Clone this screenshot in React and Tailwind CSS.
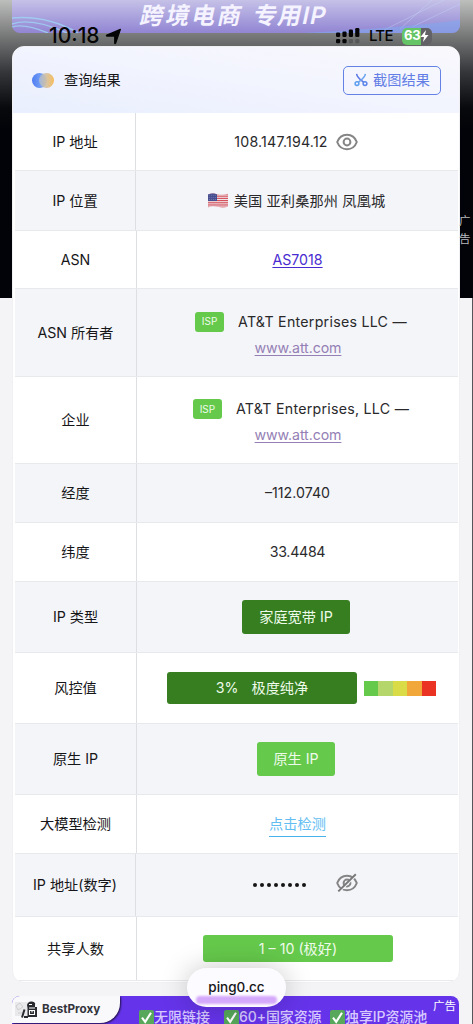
import clsx from 'clsx';

function LocationArrow() {
  return (
    <svg className="h-[17px] w-[17px]" viewBox="0 0 17 17">
      <path d="M15.4 1.4 10.6 15.2Q10 16 9.7 15V8.1H2Q.8 7.8 1.9 7.1Z" fill="#050506" stroke="#050506" strokeWidth="1.2" strokeLinejoin="round" />
    </svg>
  );
}

function SignalBars() {
  const bars = [4.5, 5.5, 7.5, 9];
  return (
    <svg className="h-[18px] w-6" viewBox="0 0 24 18">
      {bars.map((h, i) => (
        <g key={i} fill="#060608">
          <rect x={i * 6.4} y={10 - h} width="4.2" height={h} rx="1.3" />
          <rect x={i * 6.4} y="12" width="4.2" height="4.2" rx="1.3" opacity={i < 2 ? 1 : 0.22} />
        </g>
      ))}
    </svg>
  );
}

function Eye({ off }) {
  return (
    <svg className={off ? 'h-5 w-[22px]' : 'h-[18px] w-[22px]'} viewBox="0 0 22 18" fill="none" stroke="#858585" strokeWidth="2">
      <path d="M1.2 9C3 4.2 6.6 1.8 11 1.8S19 4.2 20.8 9C19 13.8 15.4 16.2 11 16.2S3 13.8 1.2 9Z" />
      <circle cx="11" cy="9" r="3.4" />
      {off && <path d="M3.4 17.2 20.6.7" stroke="#f4f5f9" strokeWidth="2.4" />}
      {off && <path d="M2.3 17.4 19.8.3" stroke="#777" strokeWidth="1.9" />}
    </svg>
  );
}

function Flag() {
  return (
    <svg className="h-[15px] w-5" viewBox="0 0 20 15">
      <clipPath id="wave">
        <path d="M0 1.4C4-.4 7 .8 10 1.4S17 2 20 .8V13.5C16 15 13 14.4 10 13.8S3 13 0 14.4Z" />
      </clipPath>
      <g clipPath="url(#wave)">
        <rect width="20" height="15" fill="#f0e4e6" />
        {[0, 1, 2, 3, 4, 5, 6].map((n) => (
          <rect key={n} y={n * 2.2 + 0.4} width="20" height="1.15" fill="#d4505d" />
        ))}
        <rect width="9" height="8" fill="#484f91" />
        <g fill="#aeb2d8">
          {[1.5, 3.7, 5.9].map((y) =>
            [1.2, 3.2, 5.2, 7.2].map((x) => <circle key={x + '-' + y} cx={x} cy={y + 0.6} r=".4" />)
          )}
        </g>
      </g>
    </svg>
  );
}

function Scissors() {
  return (
    <svg className="h-[14px] w-[14px]" viewBox="0 0 14 14" fill="none" strokeWidth="1.5">
      <path d="M2.6.8C3 4.4 6.5 6.6 9.6 9.3" stroke="#5b79e6" />
      <path d="M11.4.8C11 4.4 7.5 6.6 4.4 9.3" stroke="#6fa5ee" />
      <circle cx="3" cy="10.6" r="1.9" stroke="#5c9ff0" />
      <circle cx="11" cy="10.6" r="1.9" stroke="#5c86ec" />
    </svg>
  );
}

function Check() {
  return (
    <svg className="h-[15px] w-[15px] shrink-0" viewBox="0 0 15 15">
      <rect width="15" height="15" rx="2" fill="#57a85a" />
      <path d="M3 7.6 6.2 11.8 12 2.8" fill="none" stroke="#fff" strokeWidth="2.1" />
    </svg>
  );
}

function Badge({ className, children }) {
  return (
    <span className={clsx('flex items-center justify-center rounded-[3px] text-[#eefbea]', className)}>
      {children}
    </span>
  );
}

function Owner({ name }) {
  return (
    <div className="flex flex-col items-center pt-[3px] pl-[7px]">
      <div className="flex h-[26px] items-center">
        <Badge className="mr-[14px] h-5 w-[29px] bg-[#65c94b] text-[10px]">ISP</Badge>
        <span className="tracking-[0.26px] whitespace-nowrap">{name} —</span>
      </div>
      <a className="mr-[6px] h-[25px] leading-[25px] tracking-[-0.1px] text-[#9480b5] underline underline-offset-2">
        www.att.com
      </a>
    </div>
  );
}

const scale = ['bg-[#65c94b]', 'bg-[#b5d66b]', 'bg-[#d9dc46]', 'bg-[#f1a73a]', 'bg-[#ea3323]'];

const rows = [
  {
    label: 'IP 地址',
    height: 'h-[58px]',
    narrow: true,
    value: (
      <div className="flex items-center gap-[8px] pt-[1px] pr-[2px]">
        <span className="tracking-[0.2px]">108.147.194.12</span>
        <Eye />
      </div>
    ),
  },
  {
    label: 'IP 位置',
    height: 'h-[60px]',
    narrow: true,
    value: (
      <div className="flex items-center gap-[6px] pr-[1px]">
        <Flag />
        <span className="tracking-[0.15px]">美国 亚利桑那州 凤凰城</span>
      </div>
    ),
  },
  {
    label: 'ASN',
    height: 'h-[58px]',
    value: <a className="text-[#472bd0] underline underline-offset-2">AS7018</a>,
  },
  { label: 'ASN 所有者', height: 'h-[88px]', value: <Owner name="AT&T Enterprises LLC" /> },
  { label: '企业', height: 'h-[87px]', value: <Owner name="AT&T Enterprises, LLC" /> },
  { label: '经度', height: 'h-[59px]', value: '–112.0740' },
  { label: '纬度', height: 'h-[59px]', value: <span className="tracking-[-0.3px]">33.4484</span> },
  {
    label: 'IP 类型',
    height: 'h-[71px]',
    value: <Badge className="mr-[3px] h-[34px] w-[108px] bg-[#367e20]">家庭宽带 IP</Badge>,
  },
  {
    label: '风控值',
    height: 'h-[71px]',
    value: (
      <div className="flex items-center gap-[7px] pl-[8px]">
        <Badge className="h-8 w-[190px] gap-[13px] bg-[#367e20]">
          <span>3%</span>
          <span>极度纯净</span>
        </Badge>
        <div className="flex h-[15px] w-[72px]">
          {scale.map((color) => (
            <i key={color} className={clsx('flex-1', color)} />
          ))}
        </div>
      </div>
    ),
  },
  {
    label: '原生 IP',
    height: 'h-[71px]',
    value: <Badge className="mr-[3px] h-[34px] w-[78px] bg-[#65c94b]">原生 IP</Badge>,
  },
  {
    label: '大模型检测',
    height: 'h-[59px]',
    value: <a className="border-b border-[#4ab3ee] leading-[25px] text-[#61bdf2]">点击检测</a>,
  },
  {
    label: 'IP 地址(数字)',
    height: 'h-[63px]',
    narrow: true,
    value: (
      <div className="flex items-center gap-[30px] pb-[5px] pl-[16px]">
        <div className="mt-[5px] flex gap-[3px]">
          {[0, 1, 2, 3, 4, 5, 6, 7].map((n) => (
            <i key={n} className="h-1 w-1 rounded-full bg-[#151515]" />
          ))}
        </div>
        <Eye off />
      </div>
    ),
  },
  {
    label: '共享人数',
    height: 'h-[64px]',
    value: <Badge className="ml-[1px] h-[27px] w-[190px] bg-[#65c94b]">1 – 10 (极好)</Badge>,
  },
];

function Row({ label, value, height, narrow, striped }) {
  return (
    <div className={clsx('flex shrink-0 border-b border-[#e8e9ec]', height, striped ? 'bg-[#f4f5f9]' : 'bg-white')}>
      <div
        className={clsx(
          'flex shrink-0 items-center justify-center border-r border-[#dedfe2]',
          narrow ? 'w-[121px]' : 'w-[122px]'
        )}
      >
        {label}
      </div>
      <div className="flex flex-1 items-center justify-center text-[#29292b]">{value}</div>
    </div>
  );
}

function StatusBar() {
  return (
    <div className="absolute inset-x-0 top-[26px] h-5 text-[#050506]">
      <div className="flex h-5 items-center pl-[49px]">
        <span className="w-[53px] text-[21px] leading-5 font-medium whitespace-nowrap">10:18</span>
        <span className="ml-[3px]"><LocationArrow /></span>
        <span className="ml-auto"><SignalBars /></span>
        <span className="ml-[9px] w-[25px] text-[15px] font-medium tracking-[-0.7px]">LTE</span>
        <span className="mr-[41px] ml-[8px] flex h-[17px] w-[30px] items-center rounded-[5px] bg-linear-to-r from-[#65c466] from-63% to-[#626266] to-63% pl-[2px] text-[13px] font-bold tracking-[-0.3px] text-white">
          63
          <svg className="h-3 w-[9px]" viewBox="0 0 9 12">
            <path d="M6 0 .5 7H4L3 12 8.5 5H5Z" fill="#fff" />
          </svg>
        </span>
      </div>
    </div>
  );
}

function Banner() {
  return (
    <div className="relative ml-[12px] h-[33px] w-[448px] shrink-0 overflow-hidden rounded-b-[8px] bg-linear-to-b from-[#c5c1e7] to-[#9285d3]">
      <svg className="absolute inset-0 h-full w-full" viewBox="0 0 448 33" fill="none">
        <path d="M0 18Q35 15 66 33M0 24Q20 17 55 33M0 27Q12 23 36 33" stroke="#9ed5f4" strokeWidth="1.4" opacity=".8" />
        <path d="M370 31 432 0M388 29 420 0M400 27 448 4" stroke="#c8d8f7" opacity=".4" />
        <path d="M290 33Q390 28 448 20V33Z" fill="#82a9ee" opacity=".6" />
      </svg>
      <div className="relative ml-[129px] flex -skew-x-12 gap-[10px] pt-[4px] text-[23.5px] leading-[24px] font-bold whitespace-nowrap text-[#f5f3ff]">
        <span className="tracking-[2.3px]">跨境电商</span>
        <span className="flex tracking-[1px]">专用<b className="text-[24px] font-semibold">IP</b></span>
      </div>
    </div>
  );
}

function BottomAd() {
  return (
    <div className="relative ml-[12px] mt-[13px] h-[28px] w-[447px] shrink-0 overflow-hidden rounded-t-[8px] bg-[#6534ea]">
      <div className="absolute top-0 left-0 flex h-[27px] w-[108px] items-center rounded-br-[20px] bg-[#f9f9fb] pl-[3px] shadow-[1px_1px_2px_#24124f]">
        <svg className="h-5 w-[25px]" viewBox="0 0 25 20">
          <path d="M0 2H13V16H0Z" fill="#e9e9eb" />
          <path d="M1 6 5 3 8 7 3 10ZM3 13H9" fill="none" stroke="#cfcfd2" />
          <path d="M12 5Q13 1 17 1.5T20 5V7H22V17H12.5V8Z" fill="#292a30" />
          <path d="M7 17.5 9.5 9.5M9 17H13" stroke="#292a30" strokeWidth="2" />
          <path d="M14 4.5H17M14 8H20M14.5 10.5V14.5H19.5V10.5ZM17 11V12.5" fill="none" stroke="#fff" strokeWidth="1.1" />
        </svg>
        <b className="ml-[2px] text-[11.7px] font-bold tracking-[0px] text-[#34343c]">BestProxy</b>
      </div>
      <div className="absolute top-[14px] left-[127px] flex text-[14px] leading-[14px] font-medium whitespace-nowrap text-[#d7c9ff]">
        <span className="flex w-[85px]"><Check />无限链接</span>
        <span className="flex w-[106px] tracking-[-0.1px]"><Check />60+国家资源</span>
        <span className="flex tracking-[-0.1px]"><Check />独享IP资源池</span>
      </div>
      <span className="absolute top-0 right-[2px] px-[1px] text-[11.5px] leading-[21px] text-white">广告</span>
    </div>
  );
}

export default function App() {
  return (
    <div className="relative flex h-[1024px] w-[473px] flex-col overflow-hidden bg-[linear-gradient(to_bottom,#bdbfbd_0px,#737474_38px,#35363a_72px,#07090c_108px,#020308_130px,#020308_298px,#f4f4f7_298px)] font-[Inter,'Noto_Sans_CJK_SC',sans-serif] text-[14.2px] text-[#161618]">
      <Banner />
      <div className="ml-[12px] mt-[13px] flex h-[937px] w-[448px] shrink-0 flex-col overflow-hidden rounded-[12px] border border-[#f0f0f3] bg-white">
        <header className="flex h-[66px] shrink-0 items-center bg-linear-to-tr from-[#e9effe] via-[#f2f4fe] to-[#f9f9fd] pr-[18px] pl-[19px]">
          <div className="flex">
            <i className="h-[15px] w-[15px] rounded-full bg-linear-to-r from-[#4f7df2] to-[#8eb3f4]" />
            <i className="-ml-[8px] h-[15px] w-[15px] rounded-full bg-linear-to-r from-[#a9bdd8]/80 to-[#f7bd58]" />
          </div>
          <span className="ml-[10px]">查询结果</span>
          <button className="ml-auto flex h-[29px] w-[98px] items-center justify-center gap-[5px] rounded-[5px] border border-[#6482e5] text-[#627de5]">
            <Scissors />
            截图结果
          </button>
        </header>
        <div className="mr-[1px] ml-[2px] flex flex-col">
          {rows.map((row, i) => (
            <Row key={row.label} {...row} striped={i % 2 === 1} />
          ))}
        </div>
      </div>
      <BottomAd />
      <StatusBar />
      <span className="absolute top-[212px] right-[2px] w-3 text-[11.5px] leading-[18px] text-[#b8b9be]">广告</span>
      <div className="absolute top-[298px] right-0 bottom-0 w-px bg-[#55555a]" />
      <div className="absolute top-[968px] left-[187px] flex h-[39px] w-[99px] items-center justify-center rounded-full bg-[#fcfbff] text-[13.5px] font-medium shadow-[0_0_28px_rgba(0,0,0,0.22)]">
        <span className="absolute right-[9px] bottom-[3px] left-[9px] h-[8px] rounded-full bg-[#d4a8fa] blur-[1px]" />
        <span className="relative">ping0.cc</span>
      </div>
    </div>
  );
}
